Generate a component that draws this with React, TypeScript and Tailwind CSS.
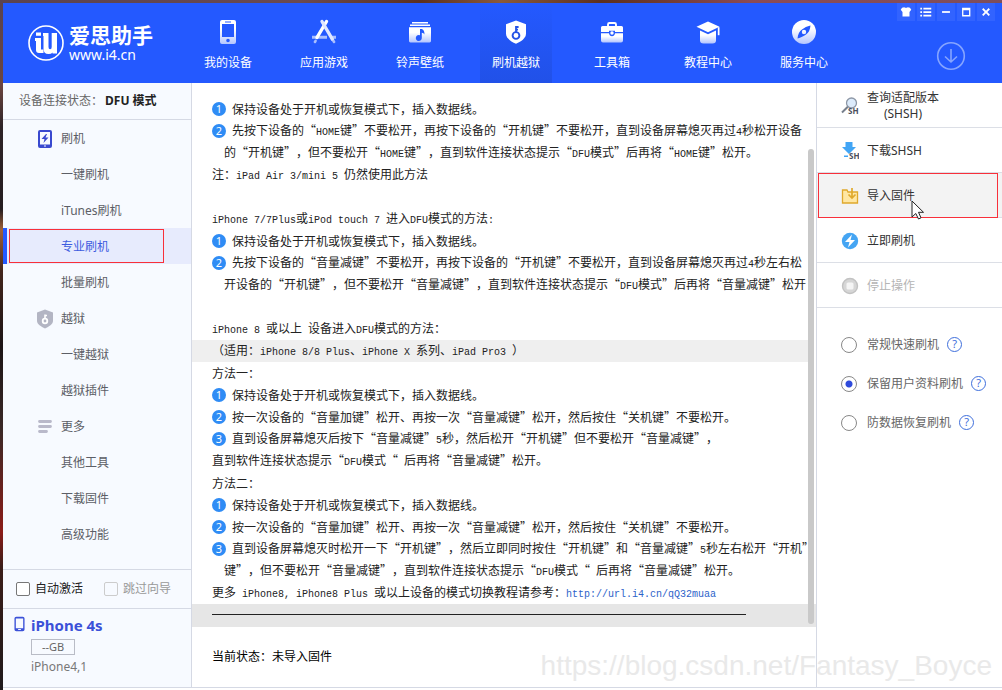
import { useState } from "react";
import type { ReactNode } from "react";

/* ---------- Iconos de la cabecera ---------- */

const IconDefs = () => (
  <svg className="absolute h-0 w-0" aria-hidden="true">
    <defs>
      <linearGradient id="fade" x1="0" y1="0" x2="0" y2="1">
        <stop offset="0.35" stopColor="#ffffff" />
        <stop offset="1" stopColor="#b4c6ff" />
      </linearGradient>
    </defs>
  </svg>
);

const PhoneIcon = () => (
  <svg viewBox="0 0 26 26" className="size-[26px]">
    <path
      fillRule="evenodd"
      fill="url(#fade)"
      d="M7 1h12a2 2 0 0 1 2 2v20a2 2 0 0 1-2 2H7a2 2 0 0 1-2-2V3a2 2 0 0 1 2-2zM7 5v13h12V5zM10 2.5v1h6v-1zM13 19.7a1.8 1.8 0 1 0 0 3.6a1.8 1.8 0 0 0 0-3.6z"
    />
  </svg>
);

const AppsIcon = () => (
  <svg viewBox="0 0 26 26" className="size-[26px]" fill="none" strokeLinecap="round">
    <path d="M1 18.300h15M19.500 18.300h5.500" stroke="#a9beff" strokeWidth="3" strokeLinecap="butt" />
    <path d="M15.500 2.500L6 18.500" stroke="#ffffff" strokeWidth="3.400" />
    <path d="M11 2.500L21.500 20.500" stroke="#dfe7ff" strokeWidth="3.400" />
    <path d="M4.600 21.800l-.7 1.200M22.500 22l.6 1" stroke="#a9beff" strokeWidth="2.600" />
  </svg>
);

const MusicIcon = () => (
  <svg viewBox="0 0 26 26" className="size-[26px]">
    <path fill="#fff" d="M5 3h16v1.6H5zM3 5.4h20V7H3z" />
    <path
      fillRule="evenodd"
      fill="url(#fade)"
      d="M2 8.2h22V22a1.4 1.4 0 0 1-1.4 1.4H3.400A1.400 1.400 0 0 1 2 22zM13 10v6.300a3 3 0 1 0 1.800 2.700v-5.200c1.200.2 2 .8 2.600 1.700c.4-2.500-.7-4.700-2.600-5.500z"
    />
  </svg>
);

const ShieldIcon = () => (
  <svg viewBox="0 0 26 26" className="size-[26px]">
    <path fill="#fff" d="M13 1.500l10 3.700v9.600c0 4-4.500 7.700-10 10c-5.500-2.300-10-6-10-10V5.200z" />
    <circle cx="13" cy="16.500" r="3.400" fill="none" stroke="#2352e6" strokeWidth="1.900" />
    <path d="M13 13V7M13 8h2.600M13 10.700h2" stroke="#2352e6" strokeWidth="1.800" fill="none" />
  </svg>
);

const ToolboxIcon = () => (
  <svg viewBox="0 0 26 26" className="size-[26px]">
    <path d="M9 8V5.500Q9 4 10.500 4h5Q17 4 17 5.500V8" fill="none" stroke="#fff" strokeWidth="1.900" />
    <path
      fill="#fff"
      d="M3.500 7h19Q24 7 24 8.500V13h-8v-1.300h-6V13H2V8.500Q2 7 3.500 7z"
    />
    <path
      fill="url(#fade)"
      d="M2 14.200h8Q10.500 17.200 13 17.200T16 14.200h8V21.500Q24 23.500 22 23.500H4Q2 23.500 2 21.500z"
    />
    <circle cx="13" cy="14" r="1.700" fill="#fff" />
  </svg>
);

const SchoolIcon = () => (
  <svg viewBox="0 0 26 26" className="size-[26px]">
    <path fill="#fff" d="M13 2.500l11.500 5.300L13 13.200L1.500 7.800z" />
    <path fill="#fff" d="M22.800 8.200h1.700v8h-1.700z" />
    <path fill="url(#fade)" d="M5 11.500l8 3.700l8-3.700V21.500Q21 24.500 17.500 24.500h-9Q5 24.500 5 21.500z" />
  </svg>
);

const CompassIcon = () => (
  <svg viewBox="0 0 26 26" className="size-[26px]">
    <circle cx="13" cy="13" r="12" fill="url(#fade)" />
    <path
      fillRule="evenodd"
      fill="#2459ff"
      d="M19.500 6.500c-.4 4.500-2 7.500-4.500 9c-2.500 1.800-5 3.200-8.500 4c.4-4.500 2-7.500 4.500-9c2.500-1.800 5-3.200 8.500-4zM13 10.800a2.200 2.200 0 1 0 0 4.400a2.200 2.200 0 0 0 0-4.400z"
    />
  </svg>
);

const navItems = [
  { label: "我的设备", icon: <PhoneIcon /> },
  { label: "应用游戏", icon: <AppsIcon /> },
  { label: "铃声壁纸", icon: <MusicIcon /> },
  { label: "刷机越狱", icon: <ShieldIcon />, active: true },
  { label: "工具箱", icon: <ToolboxIcon /> },
  { label: "教程中心", icon: <SchoolIcon /> },
  { label: "服务中心", icon: <CompassIcon /> },
];

const windowButtons = [
  { label: "皮肤", d: "M3.500 3L6 2.500Q8 4 10 2.500L12.500 3L14 5.500L12 8V13H4V8L2 5.500z" },
  { label: "菜单", d: "M1.500 3h2v2h-2zM5 3h9v2H5zM1.500 7h2v2h-2zM5 7h9v2H5zM1.500 11h2v2h-2zM5 11h9v2H5z" },
  { label: "最小化", d: "M3.500 7h9v2h-9z" },
  { label: "最大化", d: "M3.500 3h9.500V13H3.500zM5 6v5.500h6.500V6z" },
  { label: "关闭", d: "M3.500 5L5 3.500L8 6.500L11 3.500L12.500 5L9.500 8L12.500 11L11 12.500L8 9.500L5 12.500L3.500 11L6.500 8z" },
];

const Header = () => (
  <header className="relative flex h-20 shrink-0 bg-[#2459ff] text-white">
    {/* Logo */}
    <div className="flex w-[189px] shrink-0 items-center gap-1 pl-6">
      <svg viewBox="0 0 38 38" className="size-[38px]" aria-hidden="true">
        <circle cx="19" cy="19" r="17" fill="none" stroke="#fff" strokeWidth="1.600" />
        <path fill="#fff" d="M9 8.500h5v3.300H9zM8 14h6v11.500h2.500V29H12q-3 0-3-3v-9H8z" />
        <path
          fill="#fff"
          d="M16 9h5.500v14q0 2.200 1.600 2.200T24.700 23V9H30v20.500h-4.500V28.500Q24.500 30 21.500 30Q16.500 30 16.500 25V12H16z"
        />
      </svg>
      <div className="whitespace-nowrap">
        <div className="text-[21px] font-bold leading-6">爱思助手</div>
        <div className="text-sm leading-4">www.i4.cn</div>
      </div>
    </div>

    {/* Navegación principal */}
    <nav className="flex gap-6">
      {navItems.map((item) => (
        <button
          key={item.label}
          className={`flex w-[72px] flex-col items-center gap-2 pt-4 text-xs ${
            item.active ? "bg-gradient-to-b from-[#2459ff] to-[#2151e8]" : ""
          }`}
        >
          {item.icon}
          <span className="leading-5">{item.label}</span>
        </button>
      ))}
    </nav>

    {/* Controles de la ventana */}
    <div className="ml-auto flex flex-col items-end justify-between pb-3 pr-[7px]">
      <div className="flex gap-0.5">
        {windowButtons.map((b) => (
          <button key={b.label} aria-label={b.label} className="flex size-[18px] items-center justify-center bg-[#3263ff]">
            <svg viewBox="0 0 16 16" className="size-3.5">
              <path fill="#fff" fillRule="evenodd" d={b.d} />
            </svg>
          </button>
        ))}
      </div>
      <button aria-label="下载" className="mr-[29px]">
        <svg viewBox="0 0 30 30" className="size-[30px]" fill="none" stroke="#86a5ff" strokeWidth="1.600">
          <circle cx="15" cy="15" r="13.300" />
          <path d="M15 8V21M9 15.500l6 5.500l6-5.500" />
        </svg>
      </button>
    </div>
  </header>
);

/* ---------- Barra lateral ---------- */

const FlashIcon = () => (
  <svg viewBox="0 0 16 20" className="h-5 w-4">
    <path
      fillRule="evenodd"
      fill="#3949cf"
      d="M3 1h10q2 0 2 2v14q0 2-2 2H3q-2 0-2-2V3q0-2 2-2zM3 3v12.500h10V3zM7 16.500v1h2v-1z"
    />
    <path fill="#3949cf" d="M9 5L4.500 10H7.500L6.500 14L11.500 8.500H8.500L10 5z" />
  </svg>
);

const JailIcon = () => (
  <svg viewBox="0 0 16 20" className="h-5 w-4">
    <path fill="#b3b5c3" d="M8 .5l8 3v8.500c0 3-4 5.500-8 7.500c-4-2-8-4.500-8-7.500V3.500z" />
    <circle cx="8" cy="12" r="2.300" fill="none" stroke="#fff" strokeWidth="1.800" />
    <path d="M8 10V5.500M8 6.500h2" stroke="#fff" strokeWidth="1.600" />
  </svg>
);

const MoreIcon = () => (
  <svg viewBox="0 0 16 20" className="h-5 w-4" stroke="#b9b9ca" strokeWidth="2.800" strokeLinecap="round">
    <path d="M2.500 4.500h11M2.500 9.500h11M2.500 14.500h7" />
  </svg>
);

const sideItems: { label: string; icon?: ReactNode; active?: boolean }[] = [
  { label: "刷机", icon: <FlashIcon /> },
  { label: "一键刷机" },
  { label: "iTunes刷机" },
  { label: "专业刷机", active: true },
  { label: "批量刷机" },
  { label: "越狱", icon: <JailIcon /> },
  { label: "一键越狱" },
  { label: "越狱插件" },
  { label: "更多", icon: <MoreIcon /> },
  { label: "其他工具" },
  { label: "下载固件" },
  { label: "高级功能" },
];

const Sidebar = () => (
  <aside className="flex w-[189px] shrink-0 flex-col border-r border-[#d5d9e4] bg-[#f7faff] text-xs">
    <div className="flex h-[37px] items-center gap-0.5 border-b border-[#d5d9e4] pl-4 text-[#666]">
      <span>设备连接状态：</span>
      <strong className="text-[#222]">DFU 模式</strong>
    </div>

    <nav className="flex-1">
      {sideItems.map((item) => (
        <button
          key={item.label}
          className={`relative flex h-9 w-full items-center border-l-4 pl-[30px] pt-0.5 ${
            item.active
              ? "border-[#2459ff] bg-[#e7ebfd] text-[#3d5be0]"
              : "border-transparent text-[#5c5e66]"
          }`}
        >
          <span className="w-6">{item.icon}</span>
          {item.label}
          {item.active && <span className="absolute inset-y-px left-0.5 right-[27px] border border-[#f8303a]" />}
        </button>
      ))}
    </nav>

    <div className="flex h-10 items-center border-y border-[#d5d9e4] pl-[13px]">
      <label className="flex items-center gap-[5px] text-[#222]">
        <input type="checkbox" className="size-3.5 appearance-none rounded-xs border border-[#777] bg-white" />
        自动激活
      </label>
      <label className="ml-[21px] flex items-center gap-[5px] text-[#999]">
        <input type="checkbox" disabled className="size-3.5 appearance-none rounded-xs border border-[#ccc]" />
        跳过向导
      </label>
    </div>

    {/* Dispositivo conectado */}
    <div className="flex h-[78px] gap-1.5 pl-[11px] pt-1.5">
      <svg viewBox="0 0 12 18" className="h-[18px] w-[11px]">
        <path
          fillRule="evenodd"
          fill="#3b51d8"
          d="M2.500 1h7Q11.500 1 11.500 3v12q0 2-2 2h-7Q.5 17 .5 15V3Q.5 1 2.500 1zM2 3v10.500h8V3zM4.500 14.500v1h3v-1z"
        />
      </svg>
      <div>
        <div className="text-[15px] font-bold leading-5 text-[#3b51d8]">iPhone 4s</div>
        <div className="mt-1 flex h-4 w-11 items-center justify-center border border-[#b9bcc6] text-[11px] text-[#666]">
          --GB
        </div>
        <div className="mt-1 leading-4 text-[#777]">iPhone4,1</div>
      </div>
    </div>
  </aside>
);

/* ---------- Instrucciones ---------- */

type Line = { text: string; step?: number; indent?: boolean; marked?: boolean; link?: string };

const lines: Line[] = [
  { step: 1, text: "保持设备处于开机或恢复模式下，插入数据线。" },
  { step: 2, text: "先按下设备的“HOME键”不要松开，再按下设备的“开机键”不要松开，直到设备屏幕熄灭再过4秒松开设备" },
  { indent: true, text: "的“开机键”，但不要松开“HOME键”，直到软件连接状态提示“DFU模式”后再将“HOME键”松开。" },
  { text: "注：iPad Air 3/mini 5 仍然使用此方法" },
  { text: "" },
  { text: "iPhone 7/7Plus或iPod touch 7 进入DFU模式的方法:" },
  { step: 1, text: "保持设备处于开机或恢复模式下，插入数据线。" },
  { step: 2, text: "先按下设备的“音量减键”不要松开，再按下设备的“开机键”不要松开，直到设备屏幕熄灭再过4秒左右松" },
  { indent: true, text: "开设备的“开机键”，但不要松开“音量减键”，直到软件连接状态提示“DFU模式”后再将“音量减键”松开" },
  { text: "" },
  { text: "iPhone 8 或以上 设备进入DFU模式的方法：" },
  { marked: true, text: "（适用：iPhone 8/8 Plus、iPhone X 系列、iPad Pro3 ）" },
  { text: "方法一：" },
  { step: 1, text: "保持设备处于开机或恢复模式下，插入数据线。" },
  { step: 2, text: "按一次设备的“音量加键”松开、再按一次“音量减键”松开，然后按住“关机键”不要松开。" },
  { step: 3, text: "直到设备屏幕熄灭后按下“音量减键”5秒，然后松开“开机键”但不要松开“音量减键”，" },
  { text: "直到软件连接状态提示“DFU模式“ 后再将“音量减键”松开。" },
  { text: "方法二：" },
  { step: 1, text: "保持设备处于开机或恢复模式下，插入数据线。" },
  { step: 2, text: "按一次设备的“音量加键”松开、再按一次“音量减键”松开，然后按住“关机键”不要松开。" },
  { step: 3, text: "直到设备屏幕熄灭时松开一下“开机键”，然后立即同时按住“开机键”和“音量减键”5秒左右松开“开机”" },
  { indent: true, text: "键”，但不要松开“音量减键”，直到软件连接状态提示“DFU模式“ 后再将“音量减键”松开。" },
  { text: "更多 iPhone8, iPhone8 Plus 或以上设备的模式切换教程请参考：", link: "http://url.i4.cn/qQ32muaa" },
];

// Latin runs take half the width of a Chinese character
const Mixed = ({ text }: { text: string }) => (
  <>
    {text.split(/([\x20-\x7e]+)/).map((part, i) =>
      i % 2 ? (
        <span key={i} className="font-['Liberation_Mono',monospace] text-[10px]">
          {part}
        </span>
      ) : (
        part
      )
    )}
  </>
);

const Guide = () => (
  <main className="flex min-w-0 flex-1 flex-col border-r border-[#d5d9e4] bg-white">
    <div className="relative flex-1 overflow-hidden pt-[15px] font-['Noto_Sans_CJK_SC',sans-serif] text-xs text-[#222] [text-spacing-trim:space-all]">
      <div className="mr-2 overflow-hidden">
        {lines.map((line, i) => (
          <p
            key={i}
            className={`flex h-[22px] items-center whitespace-pre ${line.indent ? "pl-8" : "pl-5"} ${
              line.marked ? "bg-[#efefef]" : ""
            }`}
          >
            {line.step && (
              <span className="mr-1.5 flex size-3.5 shrink-0 items-center justify-center rounded-full bg-[#2f8cf5] font-['Noto_Sans',sans-serif] text-[11px] text-white">
                {line.step}
              </span>
            )}
            <span className="leading-[22px]">
              <Mixed text={line.text} />
              {line.link && (
                <a href={line.link} className="text-[#2c62c9]">
                  <Mixed text={line.link} />
                </a>
              )}
            </span>
          </p>
        ))}
      </div>
      <div className="h-[23px] bg-[#e6e6e6] pl-5 pr-[70px] pt-2.5">
        <hr className="border-[#222]" />
      </div>
      {/* Barra de desplazamiento */}
      <div className="absolute bottom-[3px] right-0.5 top-[66px] w-1.5 rounded-full bg-[#c9c9c9]" />
    </div>
    <div className="flex h-[60px] shrink-0 items-center pl-5 text-xs text-black">当前状态：未导入固件</div>
  </main>
);

/* ---------- Panel derecho ---------- */

const SearchShIcon = () => (
  <svg viewBox="0 0 18 18" className="size-[18px]">
    <circle cx="10.500" cy="6" r="5" fill="#dcebfb" stroke="#8d97a6" strokeWidth="1.300" />
    <path d="M6.800 9.800L1 15.500" stroke="#777f8c" strokeWidth="2" />
    <text x="7" y="17" fontSize="8" fontWeight="700" fill="#4a505c">SH</text>
  </svg>
);

const DownShIcon = () => (
  <svg viewBox="0 0 18 18" className="size-[18px]">
    <path fill="#42a5f5" d="M4.500 0h7v5h3.500L8 12L1 5h3.500zM3 13.500h4v1.500H3z" />
    <text x="8" y="17" fontSize="8" fontWeight="700" fill="#4a505c">SH</text>
  </svg>
);

const ImportIcon = () => (
  <svg viewBox="0 0 18 18" className="size-[18px]" stroke="#e0a92c" strokeWidth="1.300">
    <path d="M1.500 3H6L7 5H16.500V16H1.500z" fill="#ffe7a3" />
    <path d="M11 1v9.500M7.500 7.500L11 11l3.500-3.500" fill="none" strokeWidth="1.700" />
  </svg>
);

const FlashNowIcon = () => (
  <svg viewBox="0 0 18 18" className="size-[18px]">
    <circle cx="9" cy="9" r="8.200" fill="#45a5f3" />
    <path fill="#fff" d="M11 2.500L4 10H8.500L7 15.500L14 8H9.500z" />
  </svg>
);

const StopIcon = () => (
  <svg viewBox="0 0 18 18" className="size-[18px]">
    <circle cx="9" cy="9" r="7.500" fill="#d6d6d6" stroke="#c2c2c2" strokeWidth="1.400" />
    <rect x="5.500" y="5.500" width="7" height="7" rx="1.500" fill="#f5f5f5" />
  </svg>
);

const Cursor = () => (
  <svg viewBox="0 0 14 20" className="absolute left-[94px] top-[27px] z-10 h-5 w-3.5">
    <path d="M1 1v16l3.800-3.500L7.500 19l2.500-1.200L7.500 12.300h5z" fill="#fff" stroke="#222" strokeWidth="1" />
  </svg>
);

const actions: { label: string; sub?: string; icon: ReactNode; hover?: boolean; disabled?: boolean }[] = [
  { label: "查询适配版本", sub: "(SHSH)", icon: <SearchShIcon /> },
  { label: "下载SHSH", icon: <DownShIcon /> },
  { label: "导入固件", icon: <ImportIcon />, hover: true },
  { label: "立即刷机", icon: <FlashNowIcon /> },
  { label: "停止操作", icon: <StopIcon />, disabled: true },
];

const modes = ["常规快速刷机", "保留用户资料刷机", "防数据恢复刷机"];

const Actions = () => {
  const [mode, setMode] = useState(modes[1]);

  return (
    <aside className="w-[185px] shrink-0 bg-white text-xs">
      {actions.map((action) => (
        <button
          key={action.label}
          disabled={action.disabled}
          className={`relative flex h-[45px] w-full items-center gap-2 border-b border-[#dcdfe6] pl-6 pt-0.5 ${
            action.hover ? "bg-[#f3f3f3]" : ""
          } ${action.disabled ? "text-[#b5b5b5]" : "text-[#333]"}`}
        >
          {action.icon}
          <span className="leading-4">
            {action.label}
            {action.sub && <span className="block">{action.sub}</span>}
          </span>
          {action.hover && (
            <>
              <span className="absolute -bottom-px left-px right-1 top-0 border border-[#f8303a]" />
              <Cursor />
            </>
          )}
        </button>
      ))}

      <div className="pt-[17px]">
        {modes.map((m) => (
          <div key={m} className="flex h-[39px] items-center gap-2 pl-6 text-[#666]">
            <label className="flex items-center gap-2.5">
              <input
                type="radio"
                name="mode"
                checked={mode === m}
                onChange={() => setMode(m)}
                className="size-4 appearance-none rounded-full border border-[#888] bg-white checked:bg-[radial-gradient(circle,#2f4bdc_3px,#ffffff_4px)]"
              />
              {m}
            </label>
            <button
              aria-label={`${m}说明`}
              className="flex size-[15px] items-center justify-center rounded-full border border-[#3f6fdc] text-[11px] text-[#3f6fdc]"
            >
              ?
            </button>
          </div>
        ))}
      </div>
    </aside>
  );
};

const App = () => {
  return (
    <div
      lang="zh-CN"
      className="relative flex min-h-screen flex-col overflow-hidden bg-white font-['Noto_Sans','Noto_Sans_CJK_SC',sans-serif]"
    >
      <IconDefs />
      {/* Fondo de escritorio que asoma por los bordes */}
      <div className="h-[3px] shrink-0 bg-[linear-gradient(90deg,#5a4350,#6b4a50_30%,#5c3020_42%,#8a5a3a_50%,#5c3020_60%,#8b4b55_75%,#7d4e5c)]" />
      <div className="flex flex-1">
        <div className="w-[3px] shrink-0 bg-[linear-gradient(180deg,#5a4350,#6b4540_12%,#2e2327_18%,#241c20_30%,#a06038_33%,#43251c_39%,#1c1416_50%,#3a2826_62%,#8b1c18_77%,#3b1d18_82%,#1f1a1c)]" />
        <div className="flex min-w-0 flex-1 flex-col">
          <Header />
          <div className="flex flex-1 border-b border-[#d5d9e4]">
            <Sidebar />
            <Guide />
            <Actions />
          </div>
          <div className="h-0.5 shrink-0 bg-white" />
        </div>
      </div>
      <div className="pointer-events-none absolute bottom-1.5 right-2.5 font-['Liberation_Sans',sans-serif] text-[28px] leading-9 text-[#e9e9e9]">
        https://blog.csdn.net/Fantasy_Boyce
      </div>
    </div>
  );
};

export default App;
